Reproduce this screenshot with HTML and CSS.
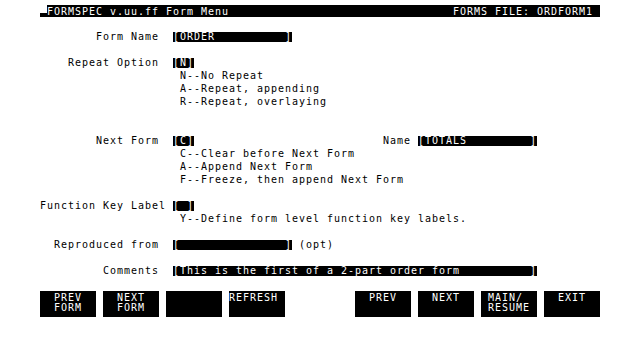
FILE: index.html
```html
<!DOCTYPE html>
<html lang="en">
<head>
  <meta charset="UTF-8" />
  <meta name="viewport" content="width=device-width, initial-scale=1.0"/>
  <title>FORMSPEC - Form Menu</title>
  <link rel="stylesheet" href="styles.css">
</head>
<body>
  <div class="screen">
    <div class="titlebar">
      <span class="cursor"></span>
      <div class="bar">
        <span>FORMSPEC v.uu.ff Form Menu</span>
        <span>FORMS FILE: ORDFORM1</span>
      </div>
    </div>

    <div class="row">
      <span class="label">Form Name</span>
      <div class="value"><span class="field">[ORDER          ]</span></div>
    </div>

    <div class="row">
      <span class="label">Repeat Option</span>
      <div class="value">
        <span class="field">[N]</span>
        <ul class="choices">
          <li>N--No Repeat</li>
          <li>A--Repeat, appending</li>
          <li>R--Repeat, overlaying</li>
        </ul>
      </div>
    </div>

    <div class="row spaced">
      <span class="label">Next Form</span>
      <div class="value">
        <span class="field">[C]</span><span class="sublabel">Name</span><span class="field">[TOTALS         ]</span>
        <ul class="choices">
          <li>C--Clear before Next Form</li>
          <li>A--Append Next Form</li>
          <li>F--Freeze, then append Next Form</li>
        </ul>
      </div>
    </div>

    <div class="row">
      <span class="label wide">Function Key Label</span>
      <div class="value">
        <span class="field">[ ]</span>
        <ul class="choices">
          <li>Y--Define form level function key labels.</li>
        </ul>
      </div>
    </div>

    <div class="row">
      <span class="label">Reproduced from</span>
      <div class="value"><span class="field">[               ]</span><span class="note">(opt)</span></div>
    </div>

    <div class="row">
      <span class="label">Comments</span>
      <div class="value"><span class="field">[This is the first of a 2-part order form          ]</span></div>
    </div>

    <div class="keys">
      <div class="keygroup">
        <div class="key">  PREV<br>  FORM</div>
        <div class="key">  NEXT<br>  FORM</div>
        <div class="key"></div>
        <div class="key">REFRESH</div>
      </div>
      <div class="keygroup">
        <div class="key">  PREV</div>
        <div class="key">  NEXT</div>
        <div class="key"> MAIN/<br> RESUME</div>
        <div class="key">  EXIT</div>
      </div>
    </div>
  </div>
</body>
</html>
```

FILE: styles.css
```css
body {
  margin: 0;
  padding: 4px 0 0 40px;
  background: #fff;
  color: #000;
  font-family: "DejaVu Sans Mono", "Liberation Mono", monospace;
  font-size: 10px;
  letter-spacing: 0.98px;
  line-height: 13px;
}
.screen {
  width: 560px;
  display: flex;
  flex-direction: column;
  gap: 13px;
}
.titlebar {
  display: flex;
  height: 12px;
  margin-top: 1px;
}
.cursor {
  width: 7px;
  background: linear-gradient(transparent 8px, #000 8px);
}
.bar {
  flex: 1;
  display: flex;
  justify-content: space-between;
  padding-right: 7px;
  background: #000;
  color: #fff;
}
.row {
  display: grid;
  grid-template-columns: 126px 1fr;
  column-gap: 7px;
}
.spaced {
  margin-top: 13px;
}
.label {
  text-align: right;
  padding-right: 7px;
  white-space: nowrap;
}
.label.wide {
  padding-right: 0;
}
.value {
  white-space: nowrap;
}
.field {
  display: inline-block;
  height: 10px;
  line-height: 10px;
  background: #000;
  color: #fff;
  white-space: pre;
}
.choices {
  list-style: none;
  margin: 0;
  padding: 0 0 0 7px;
}
.sublabel {
  margin-left: 189px;
  margin-right: 7px;
}
.note {
  margin-left: 7px;
}
.keys {
  display: flex;
  justify-content: space-between;
  margin-top: 1px;
}
.keygroup {
  display: flex;
  gap: 7px;
}
.key {
  width: 56px;
  height: 26px;
  box-sizing: border-box;
  padding-top: 2px;
  background: #000;
  color: #fff;
  line-height: 10px;
  white-space: pre;
}
```
